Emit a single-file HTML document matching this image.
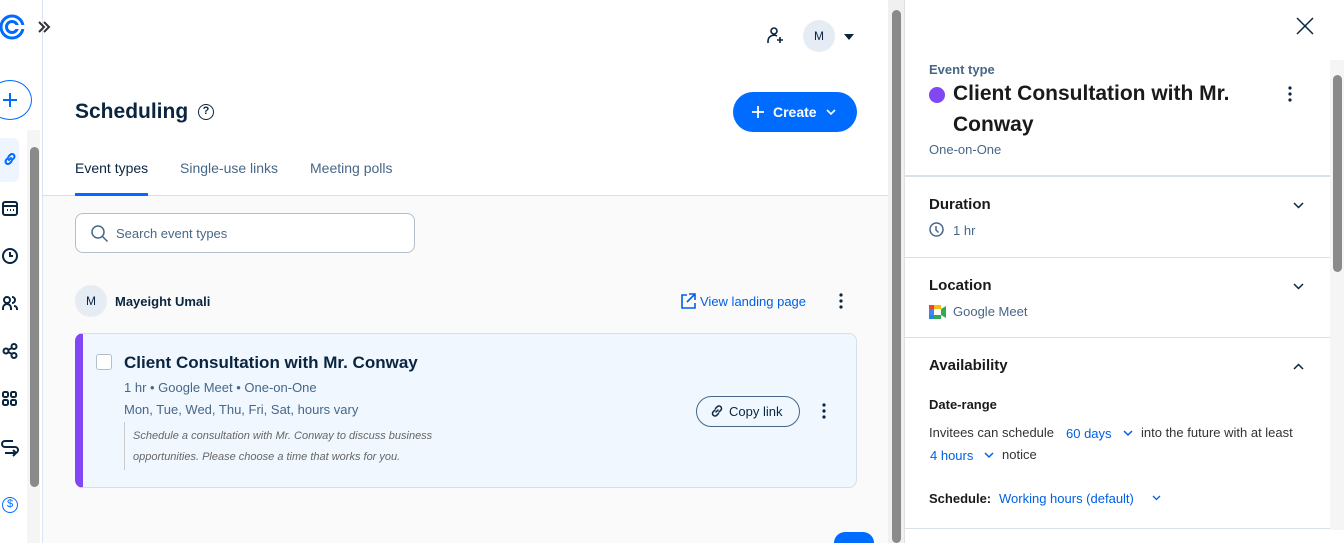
<!DOCTYPE html>
<html><head><meta charset="utf-8"><style>
*{box-sizing:border-box;margin:0;padding:0}
html,body{width:1344px;height:543px;overflow:hidden}
body{font-family:"Liberation Sans",sans-serif;background:#fff;position:relative;color:#0a2540}
.abs{position:absolute}
.side{left:0;top:0;width:43px;height:543px;border-right:1px solid #dbe4f0;background:#fff}
.main{left:43px;top:0;width:845px;height:543px;background:#fafafa}
.mtop{left:43px;top:0;width:845px;height:196px;background:#fff;border-bottom:1px solid #d4e0ed}
.t{position:absolute;white-space:nowrap}
.panel{left:904px;top:0;width:440px;height:543px;background:#fff;border-left:1px solid #e0e0e0}
.hr{position:absolute;left:905px;width:425px;height:2px;background:#d6e1ec}
.sb{background:#8a8a8a;border-radius:5px}
svg{position:absolute;overflow:visible}
</style></head><body>
<div class="abs side"></div>
<div class="abs main"></div>
<div class="abs mtop"></div>
<!-- sidebar -->
<svg style="left:0;top:13px" width="28" height="28" viewBox="0 0 28 28"><circle cx="12" cy="14" r="11" fill="none" stroke="#006bff" stroke-width="3"/><circle cx="12" cy="14" r="5.5" fill="none" stroke="#006bff" stroke-width="3"/><path d="M14 14h12" stroke="#fff" stroke-width="4"/></svg>
<svg style="left:37px;top:21px" width="14" height="12"><path d="M2 1l5 5-5 5M7 1l5 5-5 5" fill="none" stroke="#333" stroke-width="2"/></svg>
<div class="abs" style="left:-12px;top:80px;width:44px;height:40px;border:1.5px solid #006bff;border-radius:50%"></div>
<svg style="left:2px;top:92px" width="16" height="16"><path d="M8 1v14M1 8h14" stroke="#006bff" stroke-width="2"/></svg>
<div class="abs" style="left:0;top:138px;width:19px;height:44px;background:#eef5ff;border-radius:0 6px 6px 0"></div>
<svg style="left:3px;top:152px" width="14" height="14"><path d="M6 8l2-2M5 6L3 8a2.5 2.5 0 003.5 3.5L8.5 9.5M9 8l2-2a2.5 2.5 0 00-3.5-3.5L5.5 4.5" fill="none" stroke="#006bff" stroke-width="2" stroke-linecap="round"/></svg>
<svg style="left:2px;top:200px" width="16" height="16"><rect x="1" y="2" width="14" height="13" rx="2" fill="none" stroke="#0a2540" stroke-width="2"/><path d="M1 6h14" stroke="#0a2540" stroke-width="2"/><path d="M5 10h1M8 10h1M11 10h1" stroke="#0a2540" stroke-width="2"/></svg>
<svg style="left:2px;top:248px" width="16" height="16"><circle cx="8" cy="8" r="7" fill="none" stroke="#0a2540" stroke-width="2"/><path d="M8 4v4h3" fill="none" stroke="#0a2540" stroke-width="2"/></svg>
<svg style="left:2px;top:295px" width="16" height="16"><circle cx="5" cy="5" r="3" fill="none" stroke="#0a2540" stroke-width="2"/><path d="M1 15v-2a4 4 0 018 0v2" fill="none" stroke="#0a2540" stroke-width="2"/><path d="M10 2a3 3 0 010 6M12 11a3 3 0 013 3v1" fill="none" stroke="#0a2540" stroke-width="2"/></svg>
<svg style="left:2px;top:343px" width="16" height="16"><circle cx="4" cy="8" r="2.5" fill="none" stroke="#0a2540" stroke-width="2"/><circle cx="12" cy="3.5" r="2.5" fill="none" stroke="#0a2540" stroke-width="2"/><circle cx="12" cy="12.5" r="2.5" fill="none" stroke="#0a2540" stroke-width="2"/><path d="M6 7l4-2M6 9l4 2" stroke="#0a2540" stroke-width="2"/></svg>
<svg style="left:2px;top:391px" width="16" height="16"><rect x="1" y="1" width="5" height="5" rx="1.5" fill="none" stroke="#0a2540" stroke-width="2"/><rect x="9" y="1" width="5" height="5" rx="1.5" fill="none" stroke="#0a2540" stroke-width="2"/><rect x="1" y="9" width="5" height="5" rx="1.5" fill="none" stroke="#0a2540" stroke-width="2"/><rect x="9" y="9" width="5" height="5" rx="1.5" fill="none" stroke="#0a2540" stroke-width="2"/></svg>
<svg style="left:2px;top:439px" width="16" height="16"><path d="M3 2a3 3 0 000 6h10a3 3 0 010 6H3M11 11l3 3-3 3" fill="none" stroke="#0a2540" stroke-width="2"/><path d="M3 2h8" stroke="#0a2540" stroke-width="2"/></svg>
<div class="abs" style="left:2px;top:497px;width:16px;height:16px;border:1.5px solid #006bff;border-radius:50%;color:#006bff;font-size:11px;text-align:center;line-height:13px">$</div>
<div class="abs" style="left:27px;top:130px;width:13px;height:413px;background:#f5f5f5"></div>
<div class="abs sb" style="left:30px;top:147px;width:9px;height:340px"></div>
<!-- header -->
<svg style="left:767px;top:27px" width="18" height="18"><circle cx="7" cy="4" r="3" fill="none" stroke="#0a2540" stroke-width="1.6"/><path d="M1 16v-2a6 6 0 019-5" fill="none" stroke="#0a2540" stroke-width="1.6"/><path d="M13 10v6M10 13h6" stroke="#0a2540" stroke-width="1.6"/></svg>
<div class="abs" style="left:803px;top:20px;width:32px;height:32px;border-radius:50%;background:#e6ecf4;font-size:12px;text-align:center;line-height:32px">M</div>
<svg style="left:844px;top:34px" width="10" height="6"><path d="M0 0h10L5 6z" fill="#0a2540"/></svg>
<div class="t" style="left:75px;top:100px;font-size:21px;font-weight:bold">Scheduling</div>
<div class="abs" style="left:198px;top:104px;width:16px;height:16px;border:1.5px solid #0a2540;border-radius:50%;font-size:11px;text-align:center;line-height:13px;font-weight:bold">?</div>
<div class="abs" style="left:733px;top:92px;width:124px;height:40px;border-radius:20px;background:#006bff;color:#fff;font-size:14px;font-weight:bold;line-height:40px;padding-left:40px">Create</div>
<svg style="left:752px;top:106px" width="12" height="12"><path d="M6 0v12M0 6h12" stroke="#fff" stroke-width="1.8"/></svg>
<svg style="left:826px;top:109px" width="10" height="6"><path d="M1 1l4 4 4-4" fill="none" stroke="#fff" stroke-width="1.6"/></svg>
<div class="t" style="left:75px;top:160px;font-size:14px">Event types</div>
<div class="abs" style="left:75px;top:193px;width:73px;height:3px;background:#006bff"></div>
<div class="t" style="left:180px;top:160px;font-size:14px;color:#476788">Single-use links</div>
<div class="t" style="left:310px;top:160px;font-size:14px;color:#476788">Meeting polls</div>
<div class="abs" style="left:75px;top:213px;width:340px;height:40px;border:1px solid #b2bfcc;border-radius:8px;background:#fff"></div>
<svg style="left:91px;top:225px" width="18" height="18"><circle cx="7" cy="7" r="6" fill="none" stroke="#476788" stroke-width="1.5"/><path d="M11.5 11.5l5 5" stroke="#476788" stroke-width="1.5"/></svg>
<div class="t" style="left:116px;top:226px;font-size:13px;color:#476788">Search event types</div>
<div class="abs" style="left:75px;top:285px;width:32px;height:32px;border-radius:50%;background:#e6ecf4;font-size:12px;text-align:center;line-height:32px">M</div>
<div class="t" style="left:115px;top:294px;font-size:13px;font-weight:bold">Mayeight Umali</div>
<svg style="left:680px;top:293px" width="16" height="16"><path d="M7 2H2v13h13v-5" fill="none" stroke="#0060e6" stroke-width="1.6"/><path d="M9 1h6v6M15 1L7 9" fill="none" stroke="#0060e6" stroke-width="1.6"/></svg>
<div class="t" style="left:700px;top:294px;font-size:13px;color:#0060e6">View landing page</div>
<svg style="left:839px;top:293px" width="4" height="16"><circle cx="2" cy="2" r="1.6" fill="#0a2540"/><circle cx="2" cy="8" r="1.6" fill="#0a2540"/><circle cx="2" cy="14" r="1.6" fill="#0a2540"/></svg>
<!-- card -->
<div class="abs" style="left:75px;top:333px;width:782px;height:155px;background:#f0f7ff;border:1px solid #d4e0ed;border-radius:8px;border-left:8px solid #8247f5"></div>
<div class="abs" style="left:96px;top:354px;width:16px;height:16px;border:1.5px solid #b2bfcc;border-radius:3px;background:#fff"></div>
<div class="t" style="left:124px;top:353px;font-size:17px;font-weight:bold">Client Consultation with Mr. Conway</div>
<div class="t" style="left:124px;top:380px;font-size:13px;color:#476788">1 hr • Google Meet • One-on-One</div>
<div class="t" style="left:124px;top:402px;font-size:13px;color:#476788">Mon, Tue, Wed, Thu, Fri, Sat, hours vary</div>
<div class="abs" style="left:124px;top:422px;width:1px;height:48px;background:#ccc"></div>
<div class="t" style="left:133px;top:430px;font-size:11px;font-style:italic;color:#666">Schedule a consultation with Mr. Conway to discuss business</div>
<div class="t" style="left:133px;top:451px;font-size:11px;font-style:italic;color:#666">opportunities. Please choose a time that works for you.</div>
<div class="abs" style="left:696px;top:396px;width:104px;height:31px;border:1px solid #476788;border-radius:16px;font-size:13px;line-height:29px;padding-left:32px">Copy link</div>
<svg style="left:710px;top:404px" width="14" height="14"><path d="M6 8l2-2M5 6L3 8a2.5 2.5 0 003.5 3.5L8.5 9.5M9 8l2-2a2.5 2.5 0 00-3.5-3.5L5.5 4.5" fill="none" stroke="#0a2540" stroke-width="1.5" stroke-linecap="round"/></svg>
<svg style="left:822px;top:403px" width="4" height="16"><circle cx="2" cy="2" r="1.6" fill="#0a2540"/><circle cx="2" cy="8" r="1.6" fill="#0a2540"/><circle cx="2" cy="14" r="1.6" fill="#0a2540"/></svg>
<div class="abs" style="left:834px;top:532px;width:40px;height:11px;border-radius:20px 20px 0 0;background:#006bff"></div>
<!-- scrollbar mid -->
<div class="abs" style="left:888px;top:0;width:16px;height:543px;background:#f0f0f0"></div>
<div class="abs sb" style="left:892px;top:10px;width:9px;height:533px"></div>
<!-- panel -->
<div class="abs panel"></div>
<svg style="left:1297px;top:18px" width="16" height="16"><path d="M0 0l16 16M16 0L0 16" stroke="#0a2540" stroke-width="1.5"/></svg>
<div class="t" style="left:929px;top:62px;font-size:13px;font-weight:bold;color:#476788">Event type</div>
<div class="abs" style="left:929px;top:87px;width:16px;height:16px;border-radius:50%;background:#8247f5"></div>
<div class="t" style="left:953px;top:82px;font-size:21px;font-weight:bold;color:#1a1a1a">Client Consultation with Mr.</div>
<div class="t" style="left:953px;top:113px;font-size:21px;font-weight:bold;color:#1a1a1a">Conway</div>
<svg style="left:1288px;top:86px" width="4" height="16"><circle cx="2" cy="2" r="1.6" fill="#0a2540"/><circle cx="2" cy="8" r="1.6" fill="#0a2540"/><circle cx="2" cy="14" r="1.6" fill="#0a2540"/></svg>
<div class="t" style="left:929px;top:142px;font-size:13px;color:#476788">One-on-One</div>
<div class="hr" style="top:175px"></div>
<div class="t" style="left:929px;top:196px;font-size:15px;font-weight:bold;color:#1a1a1a">Duration</div>
<svg style="left:1293px;top:202px" width="11" height="7"><path d="M1 1l4.5 4.5L10 1" fill="none" stroke="#0a2540" stroke-width="1.5"/></svg>
<svg style="left:929px;top:222px" width="15" height="15"><circle cx="7.5" cy="7.5" r="6.5" fill="none" stroke="#476788" stroke-width="1.5"/><path d="M7 4v4l2.5 2.5" fill="none" stroke="#476788" stroke-width="1.5"/></svg>
<div class="t" style="left:953px;top:223px;font-size:13px;color:#476788">1 hr</div>
<div class="hr" style="top:257px;height:1px"></div>
<div class="t" style="left:929px;top:277px;font-size:15px;font-weight:bold;color:#1a1a1a">Location</div>
<svg style="left:1293px;top:283px" width="11" height="7"><path d="M1 1l4.5 4.5L10 1" fill="none" stroke="#0a2540" stroke-width="1.5"/></svg>
<svg style="left:929px;top:305px" width="17" height="14"><rect x="0" y="0" width="5" height="14" fill="#4285f4"/><rect x="5" y="0" width="7" height="4" fill="#fbbc04"/><rect x="5" y="10" width="7" height="4" fill="#34a853"/><rect x="5" y="4" width="7" height="6" fill="#fff"/><path d="M12 4l5-3v12l-5-3z" fill="#34a853"/><rect x="0" y="10" width="5" height="4" fill="#1e88e5"/><rect x="0" y="0" width="5" height="4" fill="#ea4335"/></svg>
<div class="t" style="left:953px;top:304px;font-size:13px;color:#476788">Google Meet</div>
<div class="hr" style="top:337px;height:1px"></div>
<div class="t" style="left:929px;top:357px;font-size:15px;font-weight:bold;color:#1a1a1a">Availability</div>
<svg style="left:1293px;top:363px" width="11" height="7"><path d="M1 6l4.5-4.5L10 6" fill="none" stroke="#0a2540" stroke-width="1.5"/></svg>
<div class="t" style="left:929px;top:397px;font-size:13px;font-weight:bold;color:#1a1a1a">Date-range</div>
<div class="t" style="left:929px;top:425px;font-size:13px;color:#333">Invitees can schedule</div>
<div class="t" style="left:1066px;top:426px;font-size:13px;color:#0060e6">60 days</div>
<svg style="left:1123px;top:430px" width="10" height="6"><path d="M1 1l4 4 4-4" fill="none" stroke="#0060e6" stroke-width="1.5"/></svg>
<div class="t" style="left:1141px;top:425px;font-size:13px;color:#333">into the future with at least</div>
<div class="t" style="left:930px;top:448px;font-size:13px;color:#0060e6">4 hours</div>
<svg style="left:984px;top:452px" width="10" height="6"><path d="M1 1l4 4 4-4" fill="none" stroke="#0060e6" stroke-width="1.5"/></svg>
<div class="t" style="left:1002px;top:447px;font-size:13px;color:#333">notice</div>
<div class="t" style="left:929px;top:491px;font-size:13px;color:#1a1a1a"><b>Schedule:</b></div>
<div class="t" style="left:999px;top:491px;font-size:13px;color:#0060e6">Working hours (default)</div>
<svg style="left:1152px;top:495px" width="9" height="6"><path d="M1 1l3.5 3.5L8 1" fill="none" stroke="#0060e6" stroke-width="1.3"/></svg>
<div class="hr" style="top:528px;height:1px"></div>
<div class="abs" style="left:1330px;top:60px;width:14px;height:470px;background:#f5f5f5"></div>
<div class="abs sb" style="left:1333px;top:75px;width:9px;height:197px"></div>
</body></html>
